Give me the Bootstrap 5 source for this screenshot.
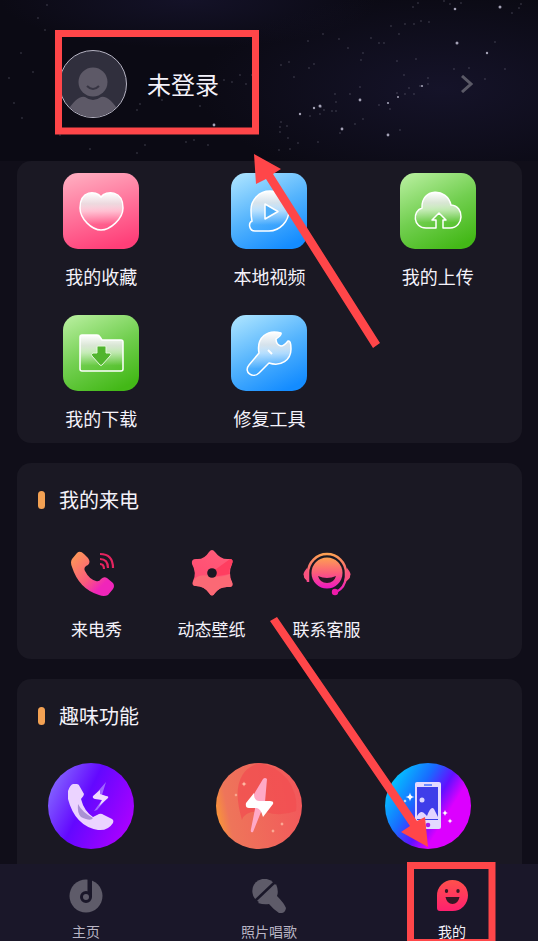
<!DOCTYPE html>
<html lang="zh-CN">
<head>
<meta charset="utf-8">
<meta name="viewport" content="width=device-width, initial-scale=1">
<title>我的</title>
<link href="https://cdn.jsdelivr.net/npm/bootstrap@5.3.0/dist/css/bootstrap.min.css" rel="stylesheet">
<style>
body{background:#100e19;color:#f4f2fa;font-family:"Noto Sans CJK SC",sans-serif}
a,a:hover{color:inherit}
svg{display:block;flex-shrink:0}
.profile{height:161px;padding:7px 65px 0 59px;background:radial-gradient(ellipse 45% 60% at 82% 55%,#151329,transparent),radial-gradient(ellipse 35% 30% at 35% 0,#141228,transparent),#0b0a14}
.user-name{font-size:24px;line-height:36px;margin-left:20px}
.panel{background:#1a1823;margin:0 16px 20px 17px;border-radius:14px}
.tools{padding-top:12px}
.tool{height:142px;gap:14px;font-size:18px;line-height:26px}
.tools .tool:nth-child(n+4){height:128px}
.heading{gap:14px;padding:22px 0 0 21px;font-size:20px;line-height:30px;margin:0;font-weight:400}
.heading::before{content:"";width:7px;height:18px;border-radius:4px;background:#f3a153}
.calls{padding:32px 0 18px 22px}
.call{width:115px;gap:18px;font-size:17px;line-height:24px}
.fun-panel{margin-bottom:0;border-radius:14px 14px 0 0}
.fun{padding:32px 0 15px}
.fun .col-4{padding-left:31px}
.tabs{background:#1a1729;padding:15px 58px 0;color:#b9b5c4}
.tab{width:56px;gap:9px;font-size:14px;line-height:18px;white-space:nowrap;padding-bottom:1px}
.tab.active{color:#f4f2fa}
.marks{pointer-events:none;z-index:1030}
</style>
</head>
<body>
<svg width="0" height="0" class="position-absolute" aria-hidden="true">
<defs>
<linearGradient id="pink" x1=".3" y1="0" x2=".6" y2="1"><stop stop-color="#ffa9bd"/><stop offset=".5" stop-color="#ff729a"/><stop offset="1" stop-color="#ff3e78"/></linearGradient>
<linearGradient id="blue" x1=".2" y1="0" x2=".7" y2="1"><stop stop-color="#a5e0ff"/><stop offset=".5" stop-color="#55b4fd"/><stop offset="1" stop-color="#148cff"/></linearGradient>
<linearGradient id="green" x1=".2" y1="0" x2=".7" y2="1"><stop stop-color="#b2ec98"/><stop offset=".5" stop-color="#72cf50"/><stop offset="1" stop-color="#43b817"/></linearGradient>
<linearGradient id="glass" x1="0" y1="0" x2="0" y2="1"><stop stop-color="#fff"/><stop offset=".3" stop-color="#e9e9e9" stop-opacity=".85"/><stop offset=".5" stop-color="#fff" stop-opacity=".55"/><stop offset=".85" stop-color="#fff" stop-opacity="0"/></linearGradient>
<linearGradient id="sunset" x1="0" y1="0" x2="1" y2="1"><stop stop-color="#fda052"/><stop offset=".5" stop-color="#fb5c7b"/><stop offset=".75" stop-color="#f025ba"/></linearGradient>
<linearGradient id="sunsetV" x1="0" y1="0" x2="0" y2="1"><stop stop-color="#fda052"/><stop offset=".5" stop-color="#fb5c7b"/><stop offset="1" stop-color="#ef16c3"/></linearGradient>
<linearGradient id="violet" x1="0" y1=".3" x2="1" y2=".8"><stop stop-color="#8364ff"/><stop offset=".4" stop-color="#6308ff"/><stop offset="1" stop-color="#b200ff"/></linearGradient>
<linearGradient id="coral" x1="0" y1=".6" x2="1" y2=".4"><stop stop-color="#f99638"/><stop offset=".14" stop-color="#ee755a"/><stop offset="1" stop-color="#f2585b"/></linearGradient>
<linearGradient id="neon" x1="0" y1=".25" x2=".9" y2=".8"><stop stop-color="#00cfff"/><stop offset=".36" stop-color="#196bff"/><stop offset=".58" stop-color="#6210ff"/><stop offset=".76" stop-color="#dc00ff"/></linearGradient>
<linearGradient id="smile" x1="0" y1="0" x2="0" y2="1"><stop stop-color="#ff504b"/><stop offset="1" stop-color="#ff206f"/></linearGradient>
<linearGradient id="petal" x1=".2" y1="1" x2=".7" y2="0"><stop stop-color="#ff466f"/><stop offset="1" stop-color="#ff5c79"/></linearGradient>
<path id="spark" d="M0-5Q.5-.5 5 0Q.5.5 0 5Q-.5.5-5 0Q-.5-.5 0-5Z"/>
</defs>
</svg>

<div class="position-relative overflow-hidden min-vh-100 d-flex flex-column">
<header class="position-relative">
<svg class="position-absolute top-0 start-0" width="538" height="160" fill="#a3a1b5" aria-hidden="true">
<path fill="none" stroke="#8c8a9d" stroke-width="1" stroke-linecap="round" d="M281 65h0M289 62h0M294 77h0M308 41h0M309 68h0M323 34h0M314 64h0M339 39h0M348 48h0M361 60h0M363 53h0M371 38h0M379 43h0M384 43h0M399 34h0M391 26h0M405 24h0M414 24h0M421 21h0M429 22h0M397 61h0M416 59h0M404 75h0M428 78h0M428 84h0M420 86h0M409 88h0M405 94h0M414 94h0M397 93h0M360 87h0M350 94h0M335 94h0M336 102h0M332 111h0M321 107h0M324 110h0M336 111h0M320 114h0M363 119h0M355 124h0M390 109h0M379 105h0M400 130h0M340 133h0M318 142h0M281 122h0M280 127h0M287 126h0M280 132h0M288 138h0M298 143h0M279 150h0M290 149h0M310 116h0M454 69h0M469 68h0M505 69h0M485 79h0M495 42h0M512 13h0M519 8h0M521 4h0M413 7h0M418 3h0M444 1h0M450 4h0M461 3h0M47 5h0M38 18h0M45 30h0M21 53h0M33 72h0M14 103h0M9 78h0M22 118h0M60 135h0M90 149h0M137 153h0M145 145h0M186 142h0M194 140h0M208 145h0M247 131h0M224 80h0M232 82h0M240 75h0M246 84h0M252 75h0M140 104h0M137 110h0M162 100h0M200 106h0"/>
<circle cx="457" cy="43" r="1.5"/><circle cx="500" cy="7" r="1.5"/><circle cx="455" cy="9" r="1.3"/><circle cx="487" cy="53" r="1.2"/><circle cx="360" cy="100" r="1.4"/><circle cx="342" cy="129" r="1.4"/><circle cx="388" cy="135" r="1.4"/><circle cx="320" cy="106" r="1.5"/><circle cx="314" cy="108" r="1.2"/><circle cx="300" cy="114" r="1.2"/><circle cx="388" cy="103" r="1.1"/><circle cx="422" cy="86" r="1.1"/><circle cx="214" cy="125" r="1.4"/><circle cx="398" cy="97" r="1"/>
</svg>
<a href="#" class="profile d-flex align-items-center text-decoration-none">
<svg class="position-relative" width="68" height="70" viewBox="0 0 68 70" aria-hidden="true"><defs><clipPath id="face"><circle cx="34" cy="35" r="33"/></clipPath></defs><circle cx="34" cy="35" r="33.5" fill="#302f3d" stroke="#b6b4c3"/><g clip-path="url(#face)"><circle cx="34" cy="33" r="14.5" fill="#5d5967"/><path d="M7 64Q18 46 26 48Q34 54 42 48Q50 46 61 64V70H7Z" fill="#5d5967"/><path d="M28 37Q34 43 40 37" fill="none" stroke="#373543" stroke-width="2"/></g></svg>
<span class="user-name position-relative">未登录</span>
<svg class="ms-auto position-relative" width="12" height="18" fill="none" stroke="#5a5966" stroke-width="3" aria-hidden="true"><path d="M1 1L10 9L1 17"/></svg>
</a>
</header>

<main class="flex-grow-1 d-flex flex-column">
<section class="panel tools row g-0">
<a href="#" class="tool col-4 d-flex flex-column align-items-center text-decoration-none">
<svg width="76" height="76"><rect width="76" height="76" rx="15" fill="url(#pink)"/><path d="M38 24C43 17 60 17 60 35C60 46 47 57 38 57C29 57 17 46 17 35C17 17 33 17 38 24Z" fill="url(#glass)" stroke="#fff" stroke-width="1.5"/></svg>我的收藏</a>
<a href="#" class="tool col-4 d-flex flex-column align-items-center text-decoration-none">
<svg width="76" height="76"><rect width="76" height="76" rx="15" fill="url(#blue)"/><path d="M24 58H38C49 58 58 48 58 37C58 27 49 18 39 18C28 18 20 27 20 37C20 41 20 44 21 48C17 50 18 58 24 58Z" fill="url(#glass)" stroke="#fff" stroke-width="1.5"/><path d="M34 31L47 38.500L34 46Z" fill="#4eaef8" stroke="#fff" stroke-width="1.5" stroke-linejoin="round"/></svg>本地视频</a>
<a href="#" class="tool col-4 d-flex flex-column align-items-center text-decoration-none">
<svg width="76" height="76"><rect width="76" height="76" rx="15" fill="url(#green)"/><path d="M36 55H26C13 55 12 38 22 35C21 15 47 14 51 32C65 33 64 55 50 55H43V47H46L39 40L32 47H36Z" fill="url(#glass)" stroke="#fff" stroke-width="1.500" stroke-linejoin="round"/></svg>我的上传</a>
<a href="#" class="tool col-4 d-flex flex-column align-items-center text-decoration-none">
<svg width="76" height="76"><rect width="76" height="76" rx="15" fill="url(#green)"/><path d="M19 20H34Q36 20 37 22L39 25H58Q60 25 60 27V54Q60 56 58 56H19Q17 56 17 54V22Q17 20 19 20Z" fill="url(#glass)" stroke="#fff" stroke-width="1.5"/><path d="M34 32Q34 31 35 31H42Q43 31 43 32V38H47Q49 39 47 41L39 50Q38 51 37 50L29 41Q27 39 30 38H34Z" fill="#51b52e" stroke="#e6fadd"/></svg>我的下载</a>
<a href="#" class="tool col-4 d-flex flex-column align-items-center text-decoration-none">
<svg width="76" height="76"><rect width="76" height="76" rx="15" fill="url(#blue)"/><path d="M28 38C25 22 37 14 50 18Q51 20 45 24Q45 30 50 31Q53 31 57 26Q60 25 60 34C60 45 50 52 38 48L28 58C22 64 12 57 18 50Z" fill="url(#glass)" stroke="#fff" stroke-width="1.5" stroke-linejoin="round"/><path d="M37 35L41 39" stroke="#fff" stroke-width="2"/></svg>修复工具</a>
</section>

<section class="panel">
<h2 class="heading d-flex align-items-center">我的来电</h2>
<div class="calls d-flex">
<a href="#" class="call d-flex flex-column align-items-center text-decoration-none">
<svg width="52" height="52"><path d="M1 12L6 6Q9 3 13 7L17 11Q20 15 17 18Q12 20 14 24Q18 32 25 34Q28 35 30 32Q33 29 36 31L42 36Q44 39 42 42L37 48Q33 50 28 48Q8 42 1 20Q-1 15 1 12Z" fill="url(#sunset)"/><path d="M29 7Q42 7 42 21M29 12Q37 12 37 21M29 17Q33 17 33 22" fill="none" stroke="#e6245f" stroke-width="2.200"/></svg>来电秀</a>
<a href="#" class="call d-flex flex-column align-items-center text-decoration-none">
<svg width="52" height="52"><path d="M23 5Q26 1 29 5Q35 13 43 12Q48 12 46 17Q42 26 46 35Q48 40 43 40Q34 39 29 46Q26 51 23 46Q18 39 10 39Q5 39 7 34Q11 26 6 17Q5 12 10 12Q18 13 23 5Z" fill="url(#petal)"/><path d="M26 25L44 12Q48 12 46 17Q42 24 44 27L26 30Z" fill="#ff3e60"/><path d="M7 35Q10 26 24 29Q36 31 44 27Q43 30 46 35Q48 40 43 40Q34 39 29 46Q26 51 23 46Q18 39 10 39Q6 39 7 35Z" fill="#fb6975"/><circle cx="26" cy="26" r="4.800" fill="#1a1823"/></svg>动态壁纸</a>
<a href="#" class="call d-flex flex-column align-items-center text-decoration-none">
<svg width="52" height="52"><path d="M7 35V26A19 19 0 0 1 45 26V30Q44 41 35 45" fill="none" stroke="url(#sunsetV)" stroke-width="2.500"/><path d="M6 21Q1 27 3 29Q2 31 8 35ZM46 21Q51 27 49 29Q50 31 44 35Z" fill="#f9537f"/><circle cx="26" cy="26" r="15.500" fill="url(#sunsetV)"/><path d="M17 29Q26 33 35 29Q33 36 26 36Q19 36 17 29Z" fill="#2a1725"/><circle cx="34" cy="45" r="3.200" fill="#ef1ba9"/></svg>联系客服</a>
</div>
</section>

<section class="panel fun-panel flex-grow-1">
<h2 class="heading d-flex align-items-center">趣味功能</h2>
<div class="fun row g-0">
<a href="#" class="col-4" aria-label="来电">
<svg width="86" height="86"><circle cx="43" cy="43" r="43" fill="url(#violet)"/><path d="M20 28Q22 22 25 21H29Q31 21 32 24L36 31Q36 33 33 36Q36 48 45 54L51 51Q53 50 56 52L64 56Q66 57 65 60Q60 68 50 67Q27 63 20 36Z" fill="#ebd3ff"/><path d="M30 41Q34 49 45 55Q43 59 33 54Q29 50 30 41Z" fill="#a991d3"/><path d="M58 19L45 34L54 37L46 48L49 47L60 34L54 32Z" fill="#9f65ff"/><path d="M52 27L45 33Q44 35 47 36L54 37L51 43L60 35Q61 33 58 33L52 31Z" fill="#f0dbff"/></svg></a>
<a href="#" class="col-4" aria-label="闪电">
<svg width="86" height="86"><circle cx="43" cy="43" r="43" fill="url(#coral)"/><path d="M43 0A43 43 0 0 1 80 48Q64 54 50 49Q29 46 26 57Q12 10 43 0Z" fill="#f14d50" opacity=".75"/><path d="M47 16Q49 14 51 16L49 39L37 69Q34 70 35 66L39 46L38 31Z" fill="#ffa9c7"/><path d="M38 30L30 40Q29 45 33 45H41Q45 46 47 54L57 41Q58 38 54 38H43Q38 38 38 30Z" fill="#fff"/><g fill="#ffc0a8"><use href="#spark" transform="translate(28 21) scale(.5)"/><use href="#spark" transform="translate(20 32) scale(.35)"/><use href="#spark" transform="translate(66 61) scale(.4)"/><use href="#spark" transform="translate(57 68) scale(.4)"/></g></svg></a>
<a href="#" class="col-4" aria-label="手机壁纸">
<svg width="86" height="86"><circle cx="43" cy="43" r="43" fill="url(#neon)"/><rect x="30" y="19" width="26" height="47" rx="2" fill="#e3d9ff"/><rect x="32" y="24" width="21" height="33" fill="#3e3de9"/><path d="M39 22H47" stroke="#426fff" stroke-width="1.500"/><circle cx="37" cy="37" r="2.500" fill="#d9d4ff"/><path d="M32 53Q36 46 40 51L42 53Q46 42 49 46L53 54V56H32Z" fill="#e3d4ff"/><circle cx="43" cy="62" r="2.300" fill="#a819e8"/><g fill="#fff"><use href="#spark" transform="translate(25 34) scale(.9)"/><use href="#spark" transform="translate(20 38) scale(.35)"/><use href="#spark" transform="translate(60 50) scale(.65)"/><use href="#spark" transform="translate(65 58) scale(.5)"/></g></svg></a>
</div>
</section>
</main>

<nav class="tabs sticky-bottom d-flex justify-content-between">
<a href="#" class="tab d-flex flex-column align-items-center text-decoration-none">
<svg width="34" height="34"><circle cx="17" cy="17" r="16.500" fill="#5e5b69"/><path d="M18.500 0H23V18H18.500Z" fill="#1a1729"/><circle cx="17" cy="18" r="4.500" fill="#5e5b69" stroke="#1a1729" stroke-width="3"/></svg>主页</a>
<a href="#" class="tab d-flex flex-column align-items-center text-decoration-none">
<svg width="34" height="34"><circle cx="12.500" cy="12" r="12.200" fill="#5e5b69"/><path d="M6 24L24 5Q27 12 25 17Q32 24 34 29Q33 35 27 34Q22 31 17 25Q12 26 6 24Z" fill="#5e5b69"/><path d="M3 22L23 3" stroke="#1a1729" stroke-width="2.500"/></svg>照片唱歌</a>
<a href="#" class="tab active d-flex flex-column align-items-center text-decoration-none" aria-current="page">
<svg width="34" height="34"><path d="M2 17A15.500 15.500 0 1 1 17.500 32H5Q2 32 2 29Z" fill="url(#smile)"/><ellipse cx="11.500" cy="12" rx="1.700" ry="2" fill="#3a1725"/><ellipse cx="23" cy="12" rx="1.700" ry="2" fill="#3a1725"/><path d="M10.500 18H24.500Q23 25 17.500 25Q12 25 10.500 18Z" fill="#351725"/></svg>我的</a>
</nav>

<!-- Guide boxes and arrows laid over the screen -->
<svg class="marks position-absolute top-0 start-0" width="538" height="950" aria-hidden="true"><g fill="none" stroke="#ff4649" stroke-width="7"><rect x="58.500" y="33.500" width="197" height="97.500"/><rect x="410.500" y="865.500" width="81.500" height="77"/></g><path fill="#ff4649" d="M254 154L281 169L273 174L380 343L373 348L266 179L256 184ZM277 617L417 821L425 817L428 847L401 832L410 826L270 621Z"/></svg>
</div>
<script src="https://cdn.jsdelivr.net/npm/bootstrap@5.3.0/dist/js/bootstrap.bundle.min.js"></script>
</body>
</html>
